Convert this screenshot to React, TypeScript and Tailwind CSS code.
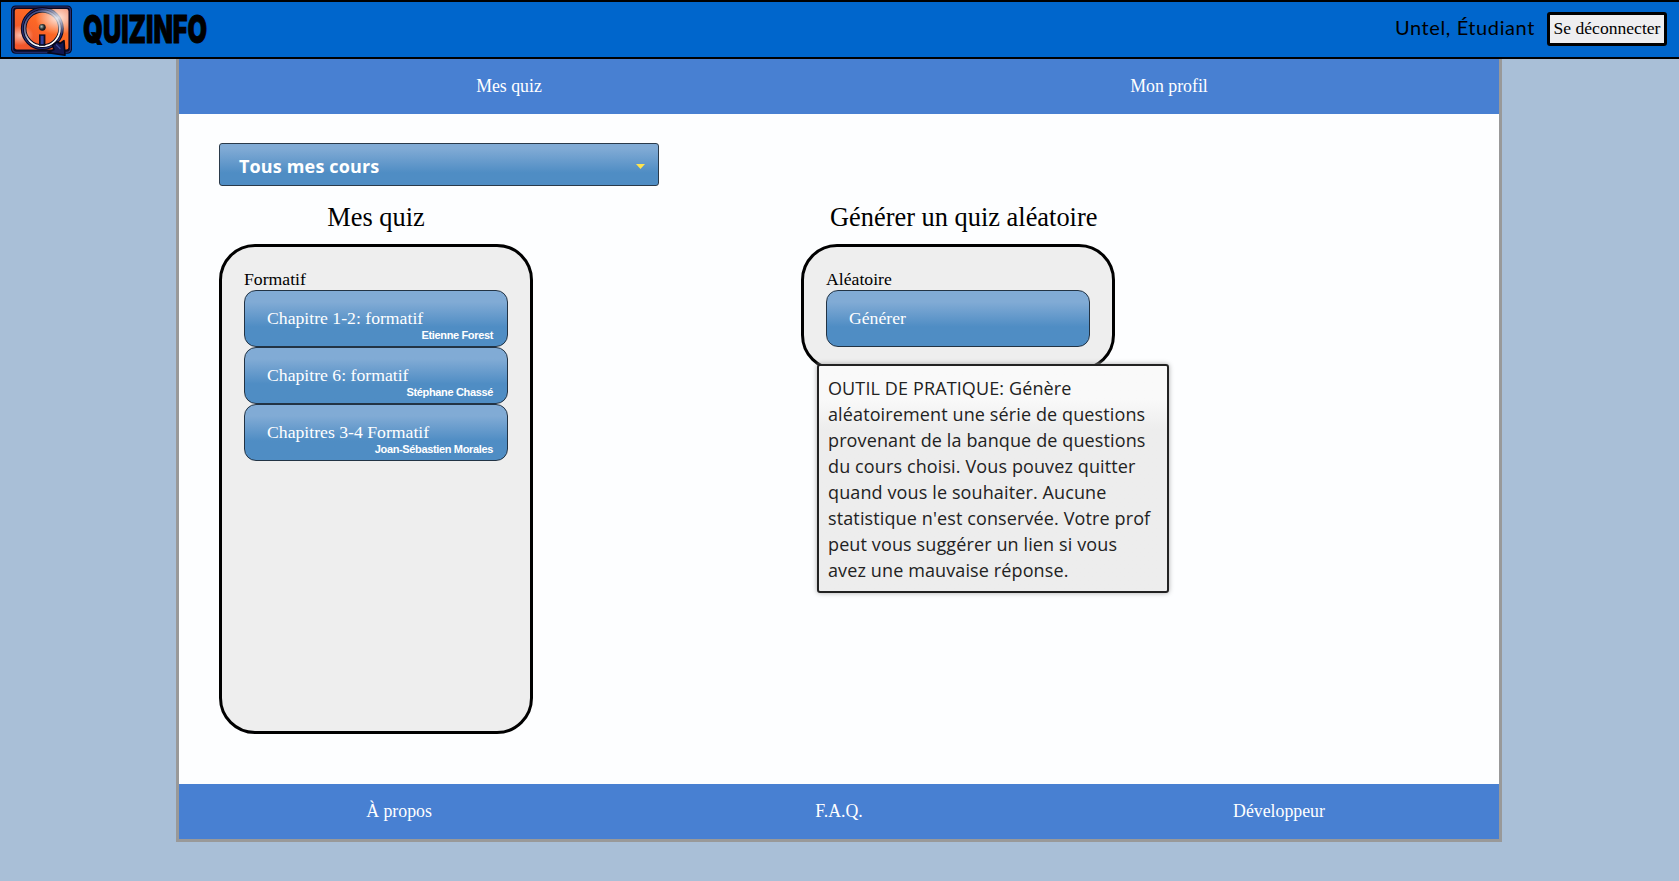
const NAV_LINKS = ["Mes quiz", "Mon profil"];
const FOOTER_LINKS = ["À propos", "F.A.Q.", "Développeur"];

const QUIZZES = [
  { title: "Chapitre 1-2: formatif", author: "Etienne Forest" },
  { title: "Chapitre 6: formatif", author: "Stéphane Chassé" },
  { title: "Chapitres 3-4 Formatif", author: "Joan-Sébastien Morales" },
];

const HELP_LINES = [
  "OUTIL DE PRATIQUE: Génère",
  "aléatoirement une série de questions",
  "provenant de la banque de questions",
  "du cours choisi. Vous pouvez quitter",
  "quand vous le souhaiter. Aucune",
  "statistique n'est conservée. Votre prof",
  "peut vous suggérer un lien si vous",
  "avez une mauvaise réponse.",
];

function Logo() {
  return (
    <svg width="64" height="55" viewBox="0 0 64 55" className="block shrink-0">
      <defs>
        <linearGradient id="plate" x1="0" y1="1" x2="1" y2="0">
          <stop offset="0" stopColor="#f4562c" />
          <stop offset="0.25" stopColor="#f0582c" />
          <stop offset="0.6" stopColor="#ff6a24" />
          <stop offset="1" stopColor="#ee7c58" />
        </linearGradient>
        <radialGradient id="shine" cx="0.8" cy="0.22" r="0.42">
          <stop offset="0" stopColor="#fff" stopOpacity="0.85" />
          <stop offset="1" stopColor="#fff" stopOpacity="0" />
        </radialGradient>
        <radialGradient id="glow" cx="0.1" cy="0.65" r="0.25">
          <stop offset="0" stopColor="#fff" stopOpacity="0.6" />
          <stop offset="1" stopColor="#fff" stopOpacity="0" />
        </radialGradient>
        <linearGradient id="ring" x1="0.2" y1="0" x2="0.5" y2="1">
          <stop offset="0" stopColor="#3c4684" />
          <stop offset="0.5" stopColor="#77799a" />
          <stop offset="0.8" stopColor="#f4f4f8" />
          <stop offset="1" stopColor="#ffffff" />
        </linearGradient>
        <radialGradient id="dot" cx="0.4" cy="0.4" r="0.6">
          <stop offset="0" stopColor="#b8c4c0" />
          <stop offset="0.6" stopColor="#2a3030" />
          <stop offset="1" stopColor="#101018" />
        </radialGradient>
      </defs>
      <rect x="1" y="3.4" width="61" height="48.4" rx="4.5" fill="#090920" />
      <rect x="2.6" y="5" width="57.8" height="45.2" rx="3.5" fill="none" stroke="#2b3278" strokeWidth="1.1" />
      <rect x="4.8" y="7" width="53.6" height="40.5" rx="2" fill="url(#plate)" />
      <rect x="4.8" y="7" width="53.6" height="40.5" rx="2" fill="url(#glow)" />
      <circle cx="32.3" cy="26.6" r="18.7" fill="none" stroke="#08081a" strokeWidth="5.6" />
      <circle cx="32.3" cy="26.6" r="19.9" fill="none" stroke="#272f78" strokeWidth="1.2" />
      <circle cx="32.3" cy="26.6" r="17.6" fill="none" stroke="url(#ring)" strokeWidth="1.7" />
      <rect x="4.8" y="7" width="53.6" height="40.5" rx="2" fill="url(#shine)" />
      <circle cx="32.3" cy="25.3" r="3.4" fill="url(#dot)" />
      <rect x="29" y="32.4" width="6.4" height="11.4" fill="#0b0b20" />
      <rect x="30.6" y="33.8" width="3" height="8.4" fill="#31419e" />
      <path
        d="M42.5 43.5 L47 39.5 L50 41.5 L54 38.6 L55 53.2 L38 50.6 L44 47.5 Z"
        fill="#121750"
        stroke="#06061a"
        strokeWidth="1.6"
        strokeLinejoin="round"
      />
      <path d="M46.5 43 L50 46.5" stroke="#3a458f" strokeWidth="1.3" strokeLinecap="round" />
    </svg>
  );
}

function QuizButton({ title, author }: { title: string; author?: string }) {
  return (
    <button className="relative flex h-[57px] w-[264px] items-center rounded-xl border border-[#223344] bg-linear-to-b from-[#81abd5] from-20% to-[#4f8dc4] to-65% pb-px pl-[22px] text-left text-[17.7px] leading-5 text-white">
      <span>{title}</span>
      {author && (
        <span className="absolute right-[14px] bottom-[4px] font-['Liberation_Sans',sans-serif] text-[11px] leading-[13px] font-bold tracking-[-0.35px]">
          {author}
        </span>
      )}
    </button>
  );
}

function LinkBar({ links }: { links: string[] }) {
  return (
    <nav className="flex h-[55px] shrink-0 bg-[#4880d2] text-[17.8px] leading-[55px] text-white">
      {links.map((label) => (
        <a key={label} className="flex-1 text-center">
          {label}
        </a>
      ))}
    </nav>
  );
}

export default function App() {
  return (
    <div className="flex h-[881px] w-[1679px] flex-col overflow-hidden bg-[#a9bfd7] font-['Liberation_Serif',serif] text-black">
      <header className="flex h-[59px] shrink-0 items-center border-y-2 border-l border-black bg-[#0066cc] pr-3">
        <div className="flex w-[82px] pl-[9px]">
          <Logo />
        </div>
        <div className="h-[55px] w-[124px]">
          <span className="inline-block origin-left scale-x-[0.665] font-[Inter,sans-serif] text-[38px] leading-[54px] font-black whitespace-nowrap [-webkit-text-stroke:0.8px_black]">
            QUIZINFO
          </span>
        </div>
        <span className="ml-auto pb-1.5 font-[Lato,sans-serif] text-[20px] leading-[50px] tracking-[0.6px]">Untel, Étudiant</span>
        <button className="mb-[2px] ml-3 h-[34px] w-[120px] rounded-[3px] border-[3px] border-black bg-[#eeeef0] pb-0.5 text-[17.6px] leading-[26px] whitespace-nowrap">
          Se déconnecter
        </button>
      </header>

      <div className="ml-[176px] flex h-[783px] w-[1326px] flex-col border-x-[3px] border-b-[3px] border-[#999] bg-[#fdfeff]">
        <LinkBar links={NAV_LINKS} />

        <main className="flex-1 pt-[29px] pl-10">
          <button className="flex h-[43px] w-[440px] items-center justify-between rounded-[3px] border border-[#2a3a4a] bg-linear-to-b from-[#81abd5] from-10% to-[#4f8dc4] to-70% pr-[13px] pl-[19px] font-['Open_Sans',sans-serif] text-[18px] font-bold text-white">
            <span className="pt-1 tracking-[0.15px]">Tous mes cours</span>
            <svg width="9" height="5" viewBox="0 0 9 5" className="mt-[3px]">
              <path d="M0 0h9L4.5 5z" fill="#ffe44d" />
            </svg>
          </button>

          <div className="flex gap-[268px]">
            <section className="w-[314px]">
              <h2 className="h-[58px] pt-[15px] text-center text-[26.4px] leading-[32px]">Mes quiz</h2>
              <div className="h-[490px] rounded-[36px] border-[3px] border-black bg-[#eee] px-[22px] pt-[22px]">
                <p className="mb-px text-[17.7px] leading-5">Formatif</p>
                {QUIZZES.map((quiz) => (
                  <QuizButton key={quiz.title} title={quiz.title} author={quiz.author} />
                ))}
              </div>
            </section>

            <section className="relative w-[314px]">
              <h2 className="h-[58px] pt-[15px] pl-[29px] text-[26.4px] leading-[32px] whitespace-nowrap">
                Générer un quiz aléatoire
              </h2>
              <div className="h-[127px] rounded-[36px] border-[3px] border-black bg-[#eee] px-[22px] pt-[22px]">
                <p className="mb-px text-[17.7px] leading-5">Aléatoire</p>
                <QuizButton title="Générer" />
              </div>
              <div className="absolute top-[178px] left-4 h-[229px] w-[352px] rounded-[3px] border-2 border-[#222] bg-linear-to-b from-[#f9f9f9] from-15% to-[#ededed] to-28% pt-[9px] pl-[9px] font-['Open_Sans',sans-serif] text-[18px] leading-[26px] tracking-[0.12px] whitespace-nowrap text-[#222] shadow-[0_0_5px_#aaa]">
                {HELP_LINES.map((line) => (
                  <p key={line}>{line}</p>
                ))}
              </div>
            </section>
          </div>
        </main>

        <LinkBar links={FOOTER_LINKS} />
      </div>
    </div>
  );
}
